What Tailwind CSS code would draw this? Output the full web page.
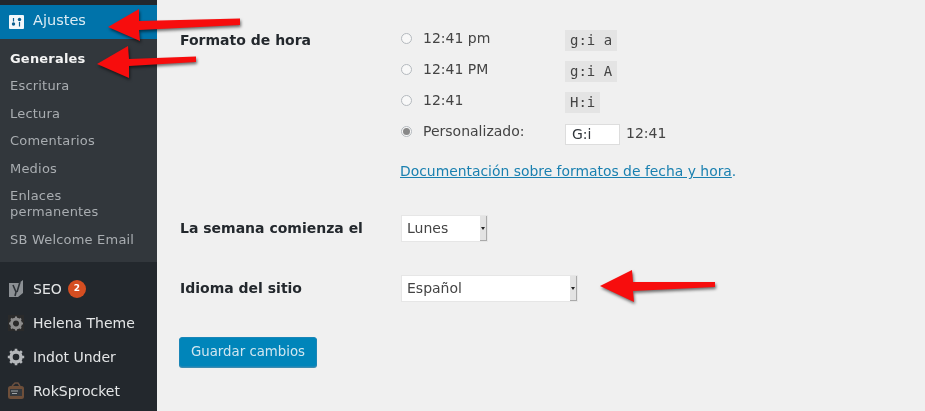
<!doctype html>
<html lang="es"><head><meta charset="utf-8"><script src="https://cdn.jsdelivr.net/npm/@tailwindcss/browser@4"></script></head>
<body class="m-0">
<div class="relative flex h-[411px] w-[925px] overflow-hidden bg-[#f0f0f0] font-['DejaVu_Sans',sans-serif] text-[14px] text-[#444] blur-[0.5px]">
  <aside class="flex h-full w-[157px] shrink-0 flex-col bg-[#23282d] text-[#eee]">
    <div class="h-[5px]"></div>
    <div class="flex h-[34px] items-center gap-[9px] bg-[#0073aa] pl-[9px] text-[14.500px] text-[#dcecf4]">
      <svg class="h-[14px] w-[15px]" viewBox="0 0 15 14"><rect width="15" height="14" rx="1" fill="#f2f7fa"/><path d="M4.500 3v3.500M10.500 7v4.500" stroke="#0a5f8f" stroke-width="1.200"/><circle cx="4.500" cy="9" r="1.700" fill="#0a5f8f"/><circle cx="10.500" cy="4.500" r="1.700" fill="#0a5f8f"/></svg>
      <span class="mb-[2px]">Ajustes</span>
    </div>
    <nav class="flex h-[223px] flex-col bg-[#32373c] pl-[10px] pt-[12px] text-[13px] leading-[16px] tracking-[0.2px] text-[#a9adb1]">
      <a class="mb-[11px] font-bold text-[#f4f4f4]">Generales</a>
      <a class="mb-[11.500px]">Escritura</a>
      <a class="mb-[11.500px]">Lectura</a>
      <a class="mb-[11.500px]">Comentarios</a>
      <a class="mb-[11.500px]">Medios</a>
      <a class="mb-[11.500px]">Enlaces<br>permanentes</a>
      <a>SB Welcome Email</a>
    </nav>
    <div class="flex flex-col pt-[10px] text-[14px] text-[#e4e6e7]">
      <div class="flex h-[34px] items-center gap-[8px] pl-[7px]">
        <svg class="h-[20px] w-[18px]" viewBox="0 0 18 20"><path d="M2 4h10l4-3v13l-5 4H2z" fill="#8c9094"/><path d="M6 6l3 7-1 4M13 3l-3 10" stroke="#2c3136" stroke-width="1.600" fill="none"/></svg>
        <span>SEO</span>
        <span class="-ml-[2px] flex h-[18px] w-[18px] items-center justify-center rounded-full bg-[#d54e21] text-[9px] font-bold text-white">2</span>
      </div>
      <div class="flex h-[34px] items-center gap-[9px] pl-[8px]">
        <svg class="h-4 w-4" viewBox="0 0 16 16"><rect width="16" height="16" fill="#2a2a2a"/><circle cx="8" cy="8.500" r="4.500" fill="none" stroke="#8d8d8d" stroke-width="3"/><path d="M8 1.500v3M8 12.500v3M1 8.500h3M12 8.500h3M3 3.500l2.500 2.500M13 3.500l-2.500 2.500M3 13.500l2.500-2.500M13 13.500l-2.500-2.500" stroke="#8d8d8d" stroke-width="2"/></svg>
        <span>Helena Theme</span>
      </div>
      <div class="flex h-[34px] items-center gap-[8px] pl-[7px]">
        <svg class="h-[18px] w-[18px]" viewBox="0 0 18 18"><circle cx="9" cy="9" r="5" fill="none" stroke="#b4b7ba" stroke-width="3.400"/><path d="M9 .8v4M9 13.200v4M.8 9h4M13.200 9h4M3.200 3.200l2.800 2.800M14.800 3.200l-2.800 2.800M3.200 14.800l2.800-2.800M14.800 14.800l-2.800-2.800" stroke="#b4b7ba" stroke-width="2.600"/></svg>
        <span>Indot Under</span>
      </div>
      <div class="flex h-[34px] items-center gap-[8px] pl-[7px]">
        <svg class="h-[18px] w-[18px]" viewBox="0 0 18 18"><path d="M5 4l3-3h3l2 3" fill="none" stroke="#6b5040" stroke-width="1.500"/><rect x="1" y="4" width="16" height="13" rx="2.500" fill="#6e4f3a"/><rect x="3" y="7" width="12" height="7" fill="#33383d"/><path d="M4 9h7M5 11.500h5" stroke="#9fa3a6"/></svg>
        <span>RokSprocket</span>
      </div>
    </div>
  </aside>
  <main class="flex flex-1 flex-col pl-[23px]">
    <section class="flex pt-[24px]">
      <h2 class="w-[221px] pt-[7px] text-[14px] leading-[18px] font-bold text-[#23282d]">Formato de hora</h2>
      <div class="flex flex-col">
        <div class="flex h-[31px] items-center">
          <span class="mb-[2px] h-[11px] w-[11px] rounded-full border border-[#b4b9be] bg-[#f8f8f8]"></span>
          <span class="mb-[2px] ml-[11px] w-[142px]">12:41 pm</span>
          <code class="mt-[1px] bg-[#e4e4e4] px-[5px] py-[2px] font-['DejaVu_Sans_Mono',monospace] text-[14px] leading-[17px]">g:i a</code>
        </div>
        <div class="flex h-[31px] items-center">
          <span class="mb-[2px] h-[11px] w-[11px] rounded-full border border-[#b4b9be] bg-[#f8f8f8]"></span>
          <span class="mb-[2px] ml-[11px] w-[142px]">12:41 PM</span>
          <code class="mt-[1px] bg-[#e4e4e4] px-[5px] py-[2px] font-['DejaVu_Sans_Mono',monospace] text-[14px] leading-[17px]">g:i A</code>
        </div>
        <div class="flex h-[31px] items-center">
          <span class="mb-[2px] h-[11px] w-[11px] rounded-full border border-[#b4b9be] bg-[#f8f8f8]"></span>
          <span class="mb-[2px] ml-[11px] w-[142px]">12:41</span>
          <code class="mt-[1px] bg-[#e4e4e4] px-[5px] py-[2px] font-['DejaVu_Sans_Mono',monospace] text-[14px] leading-[17px]">H:i</code>
        </div>
        <div class="flex h-[31px] items-center">
          <span class="mb-[3px] flex h-[11px] w-[11px] items-center justify-center rounded-full border border-[#b4b9be] bg-[#f8f8f8]"><span class="h-[7px] w-[7px] rounded-full bg-[#888]"></span></span>
          <span class="mb-[3px] ml-[11px] w-[142px]">Personalizado:</span>
          <span class="mt-[3px] flex h-[21px] w-[55px] items-center border border-[#ddd] bg-white pl-[6px] text-[#32373c]">G:i</span>
          <span class="ml-[6px] mt-[1px]">12:41</span>
        </div>
        <a class="-ml-px mt-[14px] text-[13.900px] leading-[18px] text-[#1a80b0]"><span class="underline">Documentación sobre formatos de fecha y hora</span>.</a>
      </div>
    </section>
    <section class="mt-[35px] flex items-center">
      <h2 class="mb-[1px] w-[221px] text-[14px] font-bold text-[#23282d]">La semana comienza el</h2>
      <div class="flex h-[27px] w-[87px] items-center justify-between border border-[#e6e6e6] bg-white pl-[5px]">
        <span class="mb-[1px]">Lunes</span>
        <span class="flex h-full w-[7px] items-center justify-center border-r border-b border-[#aaa] bg-[#e3e3e3]"><span class="border-x-[2.500px] border-t-[3px] border-x-transparent border-t-[#222]"></span></span>
      </div>
    </section>
    <section class="mt-[33px] flex items-center">
      <h2 class="mb-[1px] w-[221px] text-[14px] font-bold text-[#23282d]">Idioma del sitio</h2>
      <div class="flex h-[27px] w-[177px] items-center justify-between border border-[#e6e6e6] bg-white pl-[5px]">
        <span class="mb-[1px]">Español</span>
        <span class="flex h-full w-[7px] items-center justify-center border-r border-b border-[#aaa] bg-[#e3e3e3]"><span class="border-x-[2.500px] border-t-[3px] border-x-transparent border-t-[#222]"></span></span>
      </div>
    </section>
    <button class="-ml-px mt-[35px] h-[30px] w-[138px] rounded-[3px] border border-[#1a86b8] bg-[#0085ba] text-[13.300px] text-[#cfe6f0] shadow-[0_1px_0_#3a8cb0]">Guardar cambios</button>
  </main>
  <svg class="pointer-events-none absolute inset-0 h-[411px] w-[925px]" viewBox="0 0 925 411">
    <g fill="#f70d0d" style="filter:drop-shadow(1px 2px 1.500px rgba(0,0,0,.55))">
      <path d="M108 27L139 9 139 21 240 18.500 240 25 139 30 140 41z"/>
      <path d="M97 64L128 46 129 59 196 56.500 196 62 129 66 129 78z"/>
      <path d="M600 286L632 270 633 282 715 282 715 287 633 291 634 302z"/>
    </g>
  </svg>
</div>
</body></html>
